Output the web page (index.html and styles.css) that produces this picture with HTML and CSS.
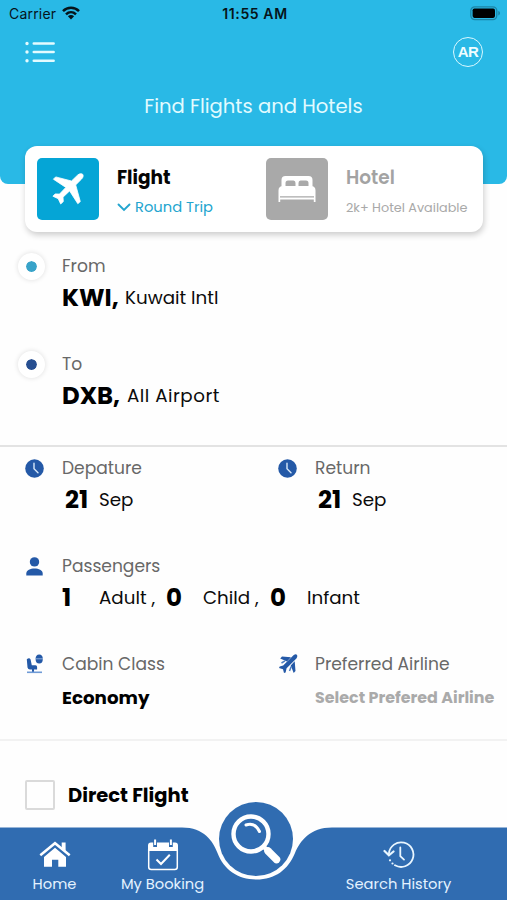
FILE: index.html
```html
<!DOCTYPE html>
<html lang="en">
<head>
<meta charset="utf-8">
<meta name="viewport" content="width=device-width, initial-scale=1">
<title>Find Flights and Hotels</title>
<link rel="stylesheet" href="styles.css">
</head>
<body>
<div class="app">
  <header class="header">
    <div class="status">
      <div class="carrier"><span>Carrier</span>
        <svg width="18" height="14" viewBox="0 0 18 14"><g fill="none" stroke="#06141a" stroke-width="2.5"><path d="M1 5.2C5.5.7 12.500.7 17 5.200"/><path d="M4 8.300C6.900 5.500 11.100 5.500 14 8.300"/></g><path d="M5.900 10.300C7.600 8.700 10.400 8.700 12.100 10.300L9 13.500Z" fill="#06141a"/></svg>
      </div>
      <div class="clock">11:55 AM</div>
      <svg class="battery" width="31" height="15" viewBox="0 0 31 15"><rect x=".8" y=".8" width="26" height="12.800" rx="4" fill="none" stroke="#1c85a6" stroke-width="1.300"/><rect x="2.600" y="2.500" width="22.400" height="9.400" rx="1.800" fill="#000"/><path d="M28.500 5v4.400c1.600-.6 1.600-3.800 0-4.400Z" fill="#176f8a"/></svg>
    </div>
    <div class="toolbar">
      <svg width="31" height="22" viewBox="0 0 31 22" fill="none" stroke="#e4fbff" stroke-width="2.600" stroke-linecap="round"><path d="M8.800 2.500H28.600M8.800 11H28.600M8.800 19.700H28.600"/><path stroke-width="3.400" d="M2 2.500h.01M2 11h.01M2 19.700h.01"/></svg>
      <span class="lang">AR</span>
    </div>
    <h1 class="title">Find Flights and Hotels</h1>
  </header>

  <section class="switcher">
    <div class="mode">
      <span class="tile tile-flight">
        <svg width="34" height="34" viewBox="0 0 34 34"><path fill="#fff" stroke="#fff" stroke-width=".8" stroke-linejoin="round" d="M26.500 3.200C28.500 1.400 30.700 1.300 31.600 2.200C32.500 3.100 32.400 5.200 30.600 7L24.700 12.900L29.300 29.600L26.800 31.700L18.600 18.900L12 25.200L12.300 29.600L9.700 32L7.200 26.700L1.900 24.200L4.200 21.900L8.500 22.100L14.800 15.400L2.400 7.200L4.700 4.900L20.500 9Z"/></svg>
      </span>
      <div class="mode-text">
        <strong class="mode-name">Flight</strong>
        <span class="trip"><svg width="14" height="9" viewBox="0 0 14 9"><path d="M1.500 1.500L7 7L12.500 1.500" fill="none" stroke="#23a5cf" stroke-width="1.900" stroke-linecap="round"/></svg>Round Trip</span>
      </div>
    </div>
    <div class="mode">
      <span class="tile tile-hotel">
        <svg width="38" height="28" viewBox="0 0 38 28"><path fill="#fff" d="M3.500 11.500V5Q3.500 1 7.500 1H30.500Q34.500 1 34.500 5V11.500H30.500V8Q30.500 5.500 28 5.500H22.500Q20.500 5.500 20.500 8V11.500H17.500V8Q17.500 5.500 15.500 5.500H10Q7.500 5.500 7.500 8V11.500Z"/><path fill="#fff" d="M.5 27V15.500Q.5 11 5 11H33Q37.500 11 37.500 15.500V27H35.800V24.500H2.200V27Z"/><path d="M2 21.800H36" stroke="#a9a9a9" stroke-width="1.200"/></svg>
      </span>
      <div class="mode-text">
        <strong class="mode-name hotel-name">Hotel</strong>
        <span class="avail">2k+ Hotel Available</span>
      </div>
    </div>
  </section>

  <section class="route">
    <div class="field">
      <div class="icon"><span class="dot"></span></div>
      <div><div class="label">From</div><div class="value"><b class="code">KWI,</b><span>Kuwait Intl</span></div></div>
    </div>
    <div class="field">
      <div class="icon"><span class="dot dot-to"></span></div>
      <div><div class="label">To</div><div class="value"><b class="code code-to">DXB,</b><span class="airport">All Airport</span></div></div>
    </div>
  </section>

  <section class="details">
    <div class="field">
      <div class="icon"><svg width="19" height="19" viewBox="0 0 19 19"><circle cx="9.500" cy="9.500" r="9.300" fill="#2459a7"/><path d="M9 4.300V9.700L13 13.700" fill="none" stroke="#d7e8fa" stroke-width="1.400" stroke-linecap="round"/></svg></div>
      <div><div class="label">Depature</div><div class="value date"><b class="num">21</b><span>Sep</span></div></div>
    </div>
    <div class="field">
      <div class="icon"><svg width="19" height="19" viewBox="0 0 19 19"><circle cx="9.500" cy="9.500" r="9.300" fill="#2459a7"/><path d="M9 4.300V9.700L13 13.700" fill="none" stroke="#d7e8fa" stroke-width="1.400" stroke-linecap="round"/></svg></div>
      <div><div class="label">Return</div><div class="value date"><b class="num">21</b><span>Sep</span></div></div>
    </div>
    <div class="field wide">
      <div class="icon"><svg width="19" height="19" viewBox="0 0 19 19" fill="#2459a7"><circle cx="9.500" cy="4.900" r="4.700"/><path d="M1.300 18.500V16.500C1.300 9.800 17.700 9.800 17.700 16.500V18.500Z"/></svg></div>
      <div><div class="label">Passengers</div>
        <div class="value pax"><b class="num">1</b><span>Adult ,</span><b class="num">0</b><span>Child ,</span><b class="num">0</b><span>Infant</span></div>
      </div>
    </div>
    <div class="field">
      <div class="icon"><svg width="19" height="20" viewBox="0 0 19 20"><g fill="#2459a7"><path d="M1.800 5.200Q4.500 3.300 5.600 5.600L6.800 11.300H10.500Q12.100 11.500 12.100 13V15.500H5Q3 15.500 2.500 13.500Z"/><ellipse cx="14.200" cy="5" rx="3.600" ry="4.500"/><path d="M7 15h2v3H7z"/></g><path d="M2 18.300H17" stroke="#6f9bd6" stroke-width="1.600"/><path d="M10.500 4.800H18" stroke="#a7c4e8" stroke-width=".8"/></svg></div>
      <div><div class="label">Cabin Class</div><div class="value low"><b class="economy">Economy</b></div></div>
    </div>
    <div class="field">
      <div class="icon"><svg width="20" height="20" viewBox="0 0 20 20"><path fill="#2459a7" d="M15.500 1.200Q18-.4 19 1Q19.800 2.500 18.400 4.500L8.600 14.300L7.600 18.500L6 19L5 15.200L1 14.100L1.700 12.400L5.200 11.600Z"/><path fill="#2459a7" d="M2.200 4.600L4 2.500L13 3.300L9 7.600ZM17.500 17L15.700 18.900L12.700 11.500L16.700 7.300Z"/><path d="M3.500 9L7 6.800M11.500 17L13.200 12.500" stroke="#4e7fc2" stroke-width="1.500"/></svg></div>
      <div><div class="label">Preferred Airline</div><div class="value low"><b class="placeholder">Select Prefered Airline</b></div></div>
    </div>
  </section>

  <label class="direct"><span class="check"></span><span>Direct Flight</span></label>

  <nav class="nav">
    <svg class="nav-bg" width="507" height="73" viewBox="0 827 507 73"><path fill="#306cb1" d="M0 827.500H182C204 827.500 213 841 217.500 853C224 870 238 879.500 256.500 879.500C275 879.500 288 870 295 853C300 841 310 827.500 332 827.500H507V900H0Z"/></svg>
    <div class="tab tab-home">
      <svg width="32" height="27" viewBox="0 0 32 27" fill="#fff"><path d="M16 6.800L27 16V25.800H19.300V18.800H13V25.800H5V16Z"/><path d="M1.300 14.300L16 2.200L30.700 14.300" fill="none" stroke="#fff" stroke-width="2.500"/><path d="M22.700 1.500H26.600V10L22.700 6.800Z"/></svg>
      <span>Home</span>
    </div>
    <div class="tab tab-booking">
      <svg width="32" height="32" viewBox="0 0 32 32"><path fill="#fff" d="M1 12V6.500Q1 3.500 4 3.500H6.200V8H10V3.500H22V8H25.800V3.500H28Q31 3.500 31 6.500V12Z"/><path d="M8.100.5V6M23.900.5V6" stroke="#fff" stroke-width="2"/><path d="M1.700 10V28Q1.700 30.500 4.200 30.500H27.800Q30.300 30.500 30.300 28V10" fill="none" stroke="#fff" stroke-width="1.500"/><path d="M9.500 20.500L14 25L22.800 15.800" fill="none" stroke="#fff" stroke-width="2"/></svg>
      <span>My Booking</span>
    </div>
    <div class="tab tab-history">
      <svg width="32" height="28" viewBox="0 0 32 28" fill="none" stroke="#e9f6ff" stroke-width="1.800" stroke-linecap="round"><path d="M5.900 12.500A12.300 12.300 0 1 1 12 24.300"/><path stroke-width="2.200" d="M1.500 10L5.900 14.300L10.500 10.500"/><path d="M17.300 6.500V15.200L21 18.600"/><path stroke-width="2.200" d="M7 19.300h.01M9.500 22.500h.01"/></svg>
      <span>Search History</span>
    </div>
    <div class="fab">
      <svg width="74" height="74" viewBox="0 0 74 74" fill="none" stroke="#fff"><circle cx="32" cy="32" r="17.500" stroke-width="4.400"/><path d="M27 23Q36 20 40.500 29.500" stroke-width="3" stroke-linecap="round"/><path d="M44.500 44.500L49 49" stroke-width="4.500"/><path d="M49 49L57.500 57.500" stroke-width="7.500" stroke-linecap="round"/></svg>
    </div>
  </nav>
</div>
</body>
</html>
```
FILE: styles.css
```css
* { box-sizing: border-box; }
body { margin: 0; background: #fefefe; font-family: Poppins, Inter, sans-serif; color: #0b0b0b; }
svg { display: block; flex: none; }
.app { width: 507px; height: 900px; display: flex; flex-direction: column; overflow: hidden; }

.header { height: 184px; flex: none; background: #29b9e6; border-radius: 0 0 8px 8px; }
.status { height: 28px; display: grid; grid-template-columns: 1fr auto 1fr; align-items: center; padding: 0 6px 0 9px; color: #06141a; font: 14px/28px Inter, sans-serif; }
.carrier { display: flex; align-items: center; gap: 6px; letter-spacing: .2px; }
.carrier svg { margin-top: -3px; }
.clock { font-weight: 600; letter-spacing: .6px; }
.battery { justify-self: end; margin-top: -1px; }
.toolbar { height: 48px; display: flex; align-items: center; justify-content: space-between; padding: 0 24px 0 25px; }
.lang { width: 30px; height: 30px; border: 1.5px solid #d9f8ff; border-radius: 50%; color: #effdff; font: 700 15px/28px "Liberation Sans", sans-serif; letter-spacing: -.7px; text-align: center; }
.title { margin: 15px 0 0; text-align: center; font-size: 19.6px; font-weight: 400; line-height: 31px; color: #e2fbff; }

.switcher { flex: none; height: 86px; margin: -38px 24px 0 25px; padding: 12px; display: grid; grid-template-columns: 229px 1fr; background: #fff; border-radius: 12px; box-shadow: 1px 3px 6px rgba(0, 0, 0, .2); }
.mode { display: flex; gap: 18px; }
.tile { width: 62px; height: 62px; flex: none; border-radius: 5px; display: grid; place-items: center; }
.tile-flight { background: #05a5d6; }
.tile-hotel { background: #a9a9a9; }
.mode-text { display: flex; flex-direction: column; padding-top: 5px; white-space: nowrap; }
.mode-name { font-size: 18.5px; font-weight: 700; line-height: 29px; color: #050505; }
.hotel-name { font-weight: 600; color: #a3a3a3; }
.trip { display: flex; align-items: center; gap: 4px; font-size: 14.7px; line-height: 30px; color: #23a5cf; }
.avail { font-size: 12.8px; line-height: 31px; color: #a9a9a9; }

.field { height: 98px; display: grid; grid-template-columns: 62px 1fr; white-space: nowrap; }
.icon { height: 32px; display: flex; align-items: center; padding-left: 25px; }
.label { height: 32px; font-size: 17.1px; line-height: 32px; color: #686868; }
.value { display: flex; align-items: center; height: 32px; line-height: 32px; font-size: 18.3px; }
.low { padding-top: 3px; }
.route { flex: none; height: 213px; padding-top: 18px; }
.route .icon { padding-left: 18px; }
.dot { width: 27px; height: 27px; border-radius: 50%; border: 8px solid #fff; background: #38a3c9; box-shadow: 0 0 4px 1px rgba(0, 0, 0, .09); background-clip: padding-box; }
.dot-to { background-color: #274f91; }
.code { width: 63px; font-size: 24.3px; color: #000; }
.code-to { width: 65px; }
.airport { letter-spacing: .5px; }

.details { flex: none; height: 296px; padding-top: 5px; border-top: 2px solid #e3e3e3; border-bottom: 2px solid #f2f2f2; display: grid; grid-template-columns: 253px 1fr; grid-template-rows: 98px 98px 98px; }
.wide { grid-column: 1 / -1; }
.num { font-size: 24.5px; font-weight: 700; color: #000; }
.date { padding-left: 3px; }
.date .num { width: 34px; }
.pax { display: grid; grid-template-columns: 37px 67px 37px 67px 37px auto; }
.economy { font-weight: 700; color: #000; }
.placeholder { padding-top: 1px; font-size: 15.9px; font-weight: 700; color: #aaa; }

.direct { flex: none; display: flex; align-items: center; gap: 13px; height: 32px; margin: 38px 0 0 25px; font-size: 19.5px; font-weight: 700; color: #000; }
.check { width: 30px; height: 30px; border: 2px solid #dadada; border-radius: 2px; }

.nav { position: relative; flex: none; height: 73px; margin-top: auto; display: grid; grid-template-columns: 109px 107px 81px 203px; }
.nav-bg { position: absolute; inset: 0; }
.tab { position: relative; display: flex; flex-direction: column; align-items: center; justify-content: flex-end; padding-bottom: 6px; color: #e4f2ff; font-size: 14.7px; line-height: 20px; white-space: nowrap; }
.tab-home svg { margin-bottom: 6px; }
.tab-booking svg { margin-bottom: 3px; }
.tab-history { grid-column: 4; }
.tab-history svg { margin-bottom: 5px; }
.fab { position: absolute; left: 219px; top: -25px; width: 74px; height: 74px; border-radius: 50%; background: #306cb1; }
```
